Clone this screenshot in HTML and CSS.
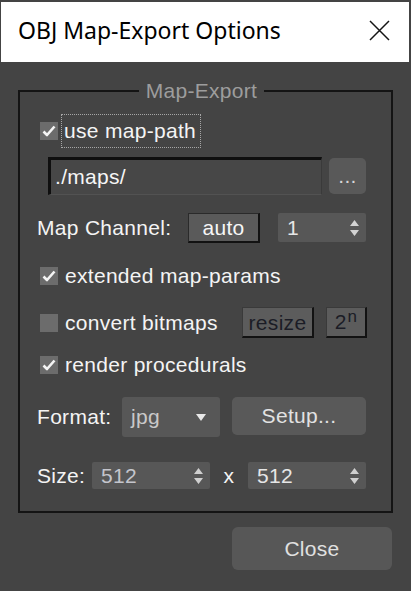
FILE: index.html
```html
<!DOCTYPE html>
<html lang="en">
<head>
<meta charset="utf-8">
<title>OBJ Map-Export Options</title>
<link rel="stylesheet" href="styles.css">
</head>
<body>
<div class="window">
  <div class="titlebar">
    <span class="title">OBJ Map-Export Options</span>
    <svg class="close-x" width="21" height="21" viewBox="0 0 21 21"><path d="M1 1 L20 20 M20 1 L1 20" stroke="#151515" stroke-width="1.5" fill="none"/></svg>
  </div>
  <div class="client">
    <fieldset class="group">
      <legend>Map-Export</legend>

      <div class="row r-path">
        <span class="cb"><svg width="18" height="18" viewBox="0 0 18 18"><path d="M3.5 9.5 L7 13 L14.5 4.5" stroke="#f4f4f4" stroke-width="2.6" fill="none" stroke-linejoin="round"/></svg></span>
        <span class="cb-label focus">use map-path</span>
      </div>

      <div class="row r-input">
        <div class="textbox">./maps/</div>
        <button class="btn dots">...</button>
      </div>

      <div class="row r-channel">
        <span class="label w-channel">Map Channel:</span>
        <button class="tbtn auto">auto</button>
        <div class="spinner sp-channel"><span>1</span><svg width="9" height="16" viewBox="0 0 9 16"><path d="M4.5 0 L9 6 L0 6Z M0 10 L9 10 L4.5 16Z" fill="#d2d2d2"/></svg></div>
      </div>

      <div class="row r-ext">
        <span class="cb"><svg width="18" height="18" viewBox="0 0 18 18"><path d="M3.5 9.5 L7 13 L14.5 4.5" stroke="#f4f4f4" stroke-width="2.6" fill="none" stroke-linejoin="round"/></svg></span>
        <span class="cb-label">extended map-params</span>
      </div>

      <div class="row r-convert">
        <span class="cb"></span>
        <span class="cb-label">convert bitmaps</span>
        <button class="tbtn dark resize">resize</button>
        <button class="tbtn dark pow">2<span class="sup">n</span></button>
      </div>

      <div class="row r-render">
        <span class="cb"><svg width="18" height="18" viewBox="0 0 18 18"><path d="M3.5 9.5 L7 13 L14.5 4.5" stroke="#f4f4f4" stroke-width="2.6" fill="none" stroke-linejoin="round"/></svg></span>
        <span class="cb-label">render procedurals</span>
      </div>

      <div class="row r-format">
        <span class="label w-format">Format:</span>
        <div class="dropdown"><span>jpg</span><svg width="10" height="7" viewBox="0 0 10 7"><path d="M0 0 H10 L5 7Z" fill="#e8e8e8"/></svg></div>
        <button class="btn setup">Setup...</button>
      </div>

      <div class="row r-size">
        <span class="label w-size">Size:</span>
        <div class="spinner sp-size"><span class="dim">512</span><svg width="9" height="16" viewBox="0 0 9 16"><path d="M4.5 0 L9 6 L0 6Z M0 10 L9 10 L4.5 16Z" fill="#cfcfcf"/></svg></div>
        <span class="times">x</span>
        <div class="spinner sp-size"><span>512</span><svg width="9" height="16" viewBox="0 0 9 16"><path d="M4.5 0 L9 6 L0 6Z M0 10 L9 10 L4.5 16Z" fill="#cfcfcf"/></svg></div>
      </div>
    </fieldset>

    <div class="footer">
      <button class="btn close">Close</button>
    </div>
  </div>
</div>
</body>
</html>
```

FILE: styles.css
```css
* { box-sizing: border-box; }

html, body {
  margin: 0;
  padding: 0;
}

body {
  width: 411px;
  height: 591px;
  overflow: hidden;
  background: #444444;
  font-family: "Liberation Sans", Arial, sans-serif;
  font-size: 21px;
  letter-spacing: 0.3px;
  color: #f4f4f4;
}

.window {
  height: 591px;
  padding-top: 2px;
  background: #444444;
}

.titlebar {
  height: 60px;
  margin: 0 2px 0 1px;
  background: #ffffff;
  display: flex;
  align-items: center;
  justify-content: space-between;
  padding: 0 19px 0 17px;
}

.title {
  font-family: "Noto Sans", "Liberation Sans", sans-serif;
  font-size: 23px;
  letter-spacing: 0;
  color: #000;
  margin-bottom: 5px;
}

.close-x {
  margin-bottom: 4px;
}

.client {
  display: flex;
  flex-direction: column;
}

.group {
  margin: 17px 18px 0 18px;
  padding: 11px 25px 22px 17px;
  border: 2px solid #141414;
  min-width: 0;
  display: flex;
  flex-direction: column;
}

.group legend {
  margin: 0 auto;
  padding: 0 7px;
  line-height: 24px;
  color: #9d9d9d;
}

.row {
  display: flex;
  align-items: center;
}

.cb {
  width: 18px;
  height: 18px;
  flex: none;
  margin-left: 3px;
  background: #6c6c6c;
  display: block;
}

.cb svg { display: block; }

.cb-label {
  margin-left: 7px;
  white-space: nowrap;
}

.cb-label.focus {
  margin-left: 3px;
  height: 34px;
  line-height: 32px;
  padding: 0 4px 0 2px;
  border: 1px dotted #a6a6a6;
}

.r-path { height: 34px; }

.r-input {
  margin-top: 9px;
  height: 38px;
  padding-left: 11px;
  gap: 7px;
}

.textbox {
  width: 274px;
  height: 38px;
  background: #474747;
  border-top: 3px solid #0f0f0f;
  border-left: 3px solid #0f0f0f;
  border-right: 1px solid #3a3a3a;
  border-bottom: 1px solid #525252;
  padding-left: 4px;
  line-height: 33px;
  color: #f6f6f6;
}

button {
  font: inherit;
  letter-spacing: inherit;
  color: inherit;
  padding: 0;
  margin: 0;
  border: none;
  cursor: default;
}

.btn {
  background: #595959;
  border-radius: 5px;
  color: #e2e2e2;
}

.dots {
  width: 37px;
  height: 36px;
  line-height: 30px;
  color: #d6d6d6;
}

.r-channel {
  margin-top: 18px;
  height: 30px;
}

.label { white-space: nowrap; flex: none; }
.w-channel { width: 151px; }
.w-format { width: 85px; }
.w-size { width: 55px; }

.tbtn {
  background: #5a5a5a;
  border-top: 1px solid #2a2a2a;
  border-left: 1px solid #2a2a2a;
  border-right: 2px solid #121212;
  border-bottom: 2px solid #121212;
  color: #f6f6f6;
}

.auto {
  width: 72px;
  height: 30px;
  line-height: 26px;
}

.spinner {
  background: #575757;
  border-radius: 2px;
  display: flex;
  align-items: center;
  justify-content: space-between;
  padding: 0 7px 0 9px;
  color: #e6e6e6;
}

.spinner svg { display: block; flex: none; }

.sp-channel {
  margin-left: 18px;
  width: 88px;
  height: 29px;
  align-self: flex-start;
}

.r-ext {
  margin-top: 19px;
  height: 28px;
}

.r-convert {
  margin-top: 17px;
  height: 31px;
}

.dark {
  background: #5c5c5c;
  color: #1b1c26;
  border-top: 1px solid #3a3a3a;
  border-left: 1px solid #3a3a3a;
}

.resize {
  margin-left: auto;
  width: 72px;
  height: 31px;
  line-height: 27px;
}

.pow {
  margin-left: 12px;
  width: 41px;
  height: 31px;
  line-height: 27px;
  margin-right: -1px;
}

.sup {
  font-size: 17px;
  position: relative;
  top: -7px;
  margin-left: 1px;
}

.r-render {
  margin-top: 13px;
  height: 28px;
}

.r-format {
  margin-top: 18px;
  height: 40px;
}

.dropdown {
  width: 98px;
  height: 40px;
  background: #575757;
  border-radius: 3px;
  display: flex;
  align-items: center;
  justify-content: space-between;
  padding: 0 14px 0 9px;
  color: #c9c9c9;
}

.dropdown svg { display: block; }

.setup {
  margin-left: 12px;
  width: 134px;
  height: 38px;
  align-self: flex-start;
}

.r-size {
  margin-top: 25px;
  height: 27px;
}

.sp-size {
  width: 118px;
  height: 27px;
}

.dim { color: #c4c5cc; }

.times {
  width: 38px;
  text-align: center;
  color: #f4f4f4;
}

.footer {
  display: flex;
  justify-content: flex-end;
  padding: 14px 19px 0 0;
}

.close {
  width: 160px;
  height: 43px;
  border-radius: 6px;
  background: #575757;
  color: #e0e0e0;
}
```
